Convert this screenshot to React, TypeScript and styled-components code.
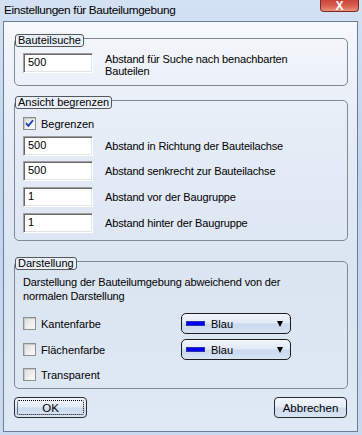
import React from "react";
import styled, { createGlobalStyle } from "styled-components";

const Global = createGlobalStyle`
  html, body { margin: 0; padding: 0; }
  body {
    background: #c4d6ee;
    font-family: "Liberation Sans", Arial, sans-serif;
    font-size: 11px;
    color: #000;
  }
`;

const Window = styled.div`
  width: 362px;
  height: 435px;
  display: flex;
  flex-direction: column;
  background: linear-gradient(180deg, #d3e1f3 0%, #c2d4ec 40%, #c9daf0 100%);
  box-sizing: border-box;
  overflow: hidden;
`;

const TitleBar = styled.div`
  height: 21px;
  flex: none;
  display: flex;
  align-items: flex-start;
  justify-content: space-between;
  padding-left: 4px;
  box-sizing: border-box;
`;

const Title = styled.div`
  font-size: 11.8px;
  letter-spacing: -0.35px;
  line-height: 14px;
  padding-top: 3px;
  color: #000;
`;

const CloseButton = styled.div`
  width: 39px;
  height: 12px;
  margin-right: 3px;
  border: 1px solid #7a2d2a;
  border-top: none;
  border-radius: 0 0 4px 4px;
  background: linear-gradient(180deg, #c9443a 0%, #d9604f 55%, #e8937c 100%);
  box-sizing: border-box;
  display: flex;
  justify-content: center;
  align-items: flex-end;
  overflow: hidden;
  color: #fff;
  font-weight: bold;
  font-size: 12px;
  line-height: 10px;
`;

const Client = styled.div`
  margin: 0 4px 0 3px;
  height: 411px;
  flex: none;
  box-sizing: border-box;
  border: 1px solid #6b7d95;
  background: linear-gradient(180deg, #f5f8fc 0%, #e6edf7 25%, #dbe5f2 60%, #dfe8f5 100%);
  padding: 12px 9px 0 10px;
  display: flex;
  flex-direction: column;
`;

const Group = styled.div<{ $gap?: number }>`
  display: flex;
  flex-direction: column;
  align-items: flex-start;
  margin-top: ${(p) => p.$gap ?? 0}px;
`;

const Legend = styled.div`
  position: relative;
  z-index: 1;
  margin-left: 1px;
  height: 13px;
  line-height: 11px;
  padding: 0 2px 0 2px;
  border: 1px solid #54595f;
  border-radius: 3px;
  box-sizing: border-box;
  background: #eaf0f9;
  white-space: nowrap;
`;

const Box = styled.div<{ $h: number; $pt: number }>`
  align-self: stretch;
  margin-top: -9px;
  height: ${(p) => p.$h}px;
  box-sizing: border-box;
  border: 1px solid #808890;
  border-radius: 5px;
  padding: ${(p) => p.$pt}px 8px 0 8px;
  display: flex;
  flex-direction: column;
`;

const FieldRow = styled.div<{ $mt?: number }>`
  display: flex;
  align-items: center;
  gap: 12px;
  margin-top: ${(p) => p.$mt ?? 0}px;
`;

const FieldRowTop = styled(FieldRow)`
  align-items: flex-start;
`;

const TextInput = styled.div`
  width: 70px;
  height: 20px;
  flex: none;
  box-sizing: border-box;
  background: #fff;
  border-top: 1px solid #a0a0a0;
  border-left: 1px solid #a0a0a0;
  border-right: 1px solid #fff;
  border-bottom: 1px solid #fff;
  box-shadow: inset 1px 1px 0 #696969, inset -1px -1px 0 #e3e3e3;
  padding: 0 0 0 4px;
  line-height: 17px;
`;

const Label = styled.div`
  line-height: 12px;
  letter-spacing: -0.15px;
`;

const CheckRow = styled.div<{ $mt?: number }>`
  display: flex;
  align-items: center;
  gap: 5px;
  height: 13px;
  margin-top: ${(p) => p.$mt ?? 0}px;
`;

const CheckBox = styled.div`
  width: 13px;
  height: 13px;
  flex: none;
  box-sizing: border-box;
  border: 1px solid #8e8f8f;
  background: linear-gradient(135deg, #dcdcdc 0%, #f0f0f0 60%, #fbfbfb 100%);
  box-shadow: inset 1px 1px 0 #c8c8c8;
  display: flex;
  align-items: center;
  justify-content: center;
`;

const Description = styled.div`
  line-height: 14px;
  letter-spacing: -0.15px;
`;

const OptionRow = styled.div<{ $mt?: number }>`
  display: flex;
  align-items: center;
  height: 21px;
  margin-top: ${(p) => p.$mt ?? 0}px;
`;

const OptionCheck = styled.div`
  width: 158px;
  display: flex;
  align-items: center;
  gap: 5px;
`;

const Dropdown = styled.div`
  width: 110px;
  height: 21px;
  box-sizing: border-box;
  border: 1px solid #1e1e1e;
  border-radius: 5px;
  background: linear-gradient(180deg, #f2f6fb 0%, #e1eaf6 45%, #c9d9ee 55%, #d6e3f3 100%);
  display: flex;
  align-items: center;
  padding: 0 7px 0 4px;
`;

const Swatch = styled.div`
  width: 19px;
  height: 5px;
  background: #0000ff;
  border: 1px solid #3030a0;
  box-sizing: border-box;
  margin-right: 6px;
`;

const DropText = styled.div`
  flex: 1;
`;

const Arrow = styled.div`
  width: 0;
  height: 0;
  border-left: 3.5px solid transparent;
  border-right: 3.5px solid transparent;
  border-top: 6px solid #000;
`;

const ButtonBar = styled.div`
  display: flex;
  justify-content: space-between;
  margin-top: 8px;
  padding-right: 1px;
`;

const Button = styled.div`
  width: 73px;
  height: 21px;
  box-sizing: border-box;
  border: 1px solid #2c2c2c;
  border-radius: 4px;
  background: linear-gradient(180deg, #f3f7fc 0%, #e3ecf7 45%, #cddcf0 55%, #d8e4f3 100%);
  display: flex;
  align-items: center;
  justify-content: center;
  padding: 2px;
`;

const ButtonInner = styled.div<{ $focused?: boolean }>`
  flex: 1;
  align-self: stretch;
  display: flex;
  align-items: center;
  justify-content: center;
  border: 1px dotted ${(p) => (p.$focused ? "#000" : "transparent")};
  border-radius: 2px;
  font-size: 11.5px;
`;

const Check = () => (
  <svg width="9" height="9" viewBox="0 0 9 9">
    <path d="M1 4.2 L3.4 6.8 L8 1.2" fill="none" stroke="#1a3fb0" strokeWidth="1.8" />
  </svg>
);

export default function App() {
  return (
    <>
      <Global />
      <Window>
        <TitleBar>
          <Title>Einstellungen für Bauteilumgebung</Title>
          <CloseButton>X</CloseButton>
        </TitleBar>
        <Client>
          <Group>
            <Legend>Bauteilsuche</Legend>
            <Box $h={48} $pt={14}>
              <FieldRowTop>
                <TextInput>500</TextInput>
                <Label>
                  Abstand für Suche nach benachbarten
                  <br />
                  Bauteilen
                </Label>
              </FieldRowTop>
            </Box>
          </Group>

          <Group $gap={10}>
            <Legend>Ansicht begrenzen</Legend>
            <Box $h={141} $pt={16}>
              <CheckRow>
                <CheckBox>
                  <Check />
                </CheckBox>
                <span>Begrenzen</span>
              </CheckRow>
              <FieldRow $mt={6}>
                <TextInput>500</TextInput>
                <Label>Abstand in Richtung der Bauteilachse</Label>
              </FieldRow>
              <FieldRow $mt={5}>
                <TextInput>500</TextInput>
                <Label>Abstand senkrecht zur Bauteilachse</Label>
              </FieldRow>
              <FieldRow $mt={6}>
                <TextInput>1</TextInput>
                <Label>Abstand vor der Baugruppe</Label>
              </FieldRow>
              <FieldRow $mt={6}>
                <TextInput>1</TextInput>
                <Label>Abstand hinter der Baugruppe</Label>
              </FieldRow>
            </Box>
          </Group>

          <Group $gap={16}>
            <Legend>Darstellung</Legend>
            <Box $h={128} $pt={13}>
              <Description>
                Darstellung der Bauteilumgebung abweichend von der
                <br />
                normalen Darstellung
              </Description>
              <OptionRow $mt={10}>
                <OptionCheck>
                  <CheckBox />
                  <span>Kantenfarbe</span>
                </OptionCheck>
                <Dropdown>
                  <Swatch />
                  <DropText>Blau</DropText>
                  <Arrow />
                </Dropdown>
              </OptionRow>
              <OptionRow $mt={5}>
                <OptionCheck>
                  <CheckBox />
                  <span>Flächenfarbe</span>
                </OptionCheck>
                <Dropdown>
                  <Swatch />
                  <DropText>Blau</DropText>
                  <Arrow />
                </Dropdown>
              </OptionRow>
              <CheckRow $mt={8}>
                <CheckBox />
                <span>Transparent</span>
              </CheckRow>
            </Box>
          </Group>

          <ButtonBar>
            <Button>
              <ButtonInner $focused>OK</ButtonInner>
            </Button>
            <Button>
              <ButtonInner>Abbrechen</ButtonInner>
            </Button>
          </ButtonBar>
        </Client>
      </Window>
    </>
  );
}
